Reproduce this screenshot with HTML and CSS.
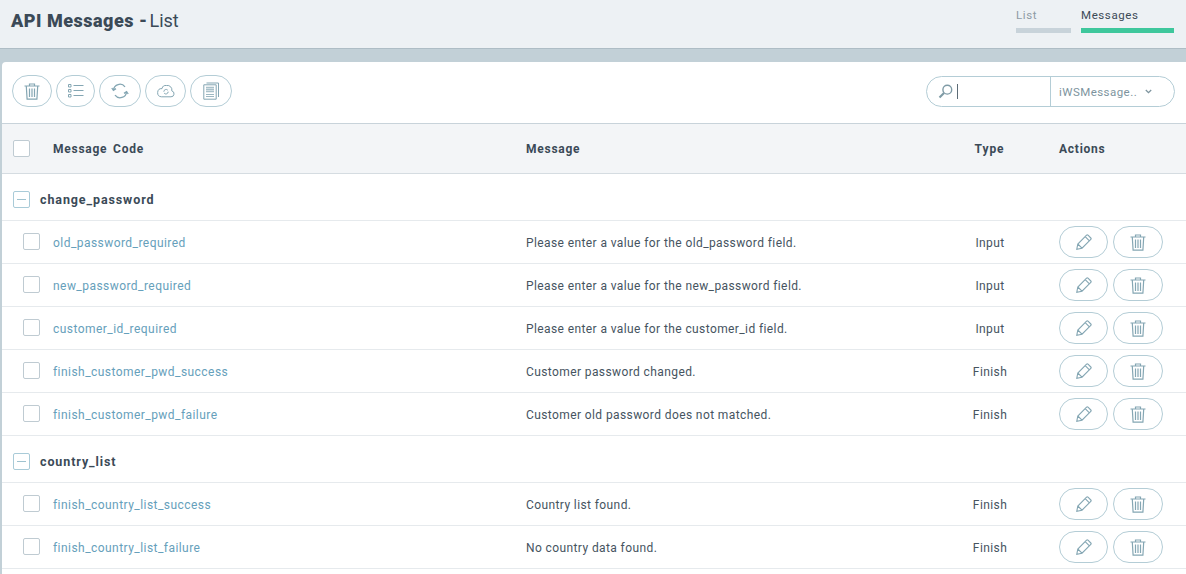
FILE: index.html
```html
<!DOCTYPE html>
<html lang="en">
<head>
<meta charset="utf-8">
<title>API Messages - List</title>
<link rel="stylesheet" href="styles.css">
</head>
<body>
<svg class="defs" width="0" height="0" aria-hidden="true">
  <defs>
    <symbol id="i-trash" viewBox="0 0 16 17">
      <path d="M.5 3h15M5.500 3V1h5v2M2.300 3.200l.8 13h9.800l.8-13M5.500 5.500v8.500M8 5.500v8.500M10.500 5.500v8.500" fill="none" stroke="currentColor" stroke-width="1.200"/>
    </symbol>
    <symbol id="i-pencil" viewBox="0 0 16 16">
      <path d="M.8 15.200l1-5.200L10.600 1.200a1 1 0 0 1 1.400 0l2.800 2.800a1 1 0 0 1 0 1.400L6 14.200zM1.800 10L6 14.200M9.200 2.600l4.200 4.200" fill="none" stroke="currentColor" stroke-width="1.100"/>
    </symbol>
  </defs>
</svg>
<header class="topbar">
  <h1 class="title"><b>API Messages -</b> <span class="title-sub">List</span></h1>
  <nav class="steps">
    <div class="step step-list">List</div>
    <div class="step step-active">Messages</div>
  </nav>
</header>
<div class="band">
  <main class="card">
    <div class="toolbar">
      <div class="tools">
        <button class="pill w40" type="button"><svg width="16" height="17"><use href="#i-trash"/></svg></button>
        <button class="pill w39" type="button">
          <svg width="16" height="16" viewBox="0 0 16 16" fill="none" stroke="currentColor"><path d="M.5 1.500h2.500v2.500H.5zM.5 6.500h2.500v2.500H.5zM.5 11.500h2.500v2.500H.5zM5.500 2.500h10M5.500 7.500h10M5.500 12.500h10"/></svg>
        </button>
        <button class="pill w42" type="button">
          <svg width="18" height="16" viewBox="0 0 18 16" fill="none" stroke="currentColor" stroke-width="1.300"><path d="M2.400 7A6.500 6.500 0 0 1 14 3.800M15.600 9A6.500 6.500 0 0 1 4 12.200M0.800 5l1.600 2.400L5 5.600M17.200 11l-1.600-2.400L13 10.400"/></svg>
        </button>
        <button class="pill w41" type="button">
          <svg width="18" height="14" viewBox="0 0 18 14" fill="none" stroke="currentColor"><path d="M4.500 12.800H14a3 3 0 0 0 .8-5.900A4.500 4.500 0 0 0 9.500 1.500 4 4 0 0 0 5 4.600a4.100 4.100 0 0 0-.5 8.200z"/><path d="M6.800 7.700a2.300 2.300 0 0 1 4-1.500M11.200 7.700a2.300 2.300 0 0 1-4 1.500" stroke-width="1"/></svg>
        </button>
        <button class="pill w42" type="button">
          <svg width="16" height="18" viewBox="0 0 16 18" fill="none" stroke="currentColor"><path d="M3.500 1h12v14M.8 2.800h12.400v14.400H.8z"/><path d="M3 5.500h8M3 7.500h8M3 9.500h8" stroke-width="1.600" opacity=".7"/><path d="M3 12.500h8M3 14.500h8" stroke-width=".8"/></svg>
        </button>
      </div>
      <div class="search">
        <div class="search-input">
          <svg width="15" height="15" viewBox="0 0 15 15" fill="none" stroke="currentColor"><circle cx="9.300" cy="5.700" r="4.400" stroke-width="1.400"/><path d="M6 9L1.500 13.500" stroke-width="2.200"/></svg>
          <span class="caret"></span>
        </div>
        <div class="search-select"><span>iWSMessage..</span><svg width="7" height="5" viewBox="0 0 7 5" fill="none" stroke="currentColor" stroke-width="1.300"><path d="M.8 1l2.700 2.600L6.200 1"/></svg></div>
      </div>
    </div>

    <div class="row head">
      <div class="c-check"><span class="box"></span></div>
      <div>Message Code</div>
      <div>Message</div>
      <div class="c-type">Type</div>
      <div class="c-actions">Actions</div>
    </div>

    <div class="group"><span class="box minus"></span><b>change_password</b></div>

    <div class="row">
      <div class="c-check"><span class="box"></span></div>
      <a class="code" href="#">old_password_required</a>
      <div class="msg">Please enter a value for the old_password field.</div>
      <div class="c-type">Input</div>
      <div class="c-actions"><button class="pill act-edit" type="button"><svg width="16" height="16"><use href="#i-pencil"/></svg></button><button class="pill act-del" type="button"><svg width="16" height="17"><use href="#i-trash"/></svg></button></div>
    </div>
    <div class="row">
      <div class="c-check"><span class="box"></span></div>
      <a class="code" href="#">new_password_required</a>
      <div class="msg">Please enter a value for the new_password field.</div>
      <div class="c-type">Input</div>
      <div class="c-actions"><button class="pill act-edit" type="button"><svg width="16" height="16"><use href="#i-pencil"/></svg></button><button class="pill act-del" type="button"><svg width="16" height="17"><use href="#i-trash"/></svg></button></div>
    </div>
    <div class="row">
      <div class="c-check"><span class="box"></span></div>
      <a class="code" href="#">customer_id_required</a>
      <div class="msg">Please enter a value for the customer_id field.</div>
      <div class="c-type">Input</div>
      <div class="c-actions"><button class="pill act-edit" type="button"><svg width="16" height="16"><use href="#i-pencil"/></svg></button><button class="pill act-del" type="button"><svg width="16" height="17"><use href="#i-trash"/></svg></button></div>
    </div>
    <div class="row">
      <div class="c-check"><span class="box"></span></div>
      <a class="code" href="#">finish_customer_pwd_success</a>
      <div class="msg">Customer password changed.</div>
      <div class="c-type">Finish</div>
      <div class="c-actions"><button class="pill act-edit" type="button"><svg width="16" height="16"><use href="#i-pencil"/></svg></button><button class="pill act-del" type="button"><svg width="16" height="17"><use href="#i-trash"/></svg></button></div>
    </div>
    <div class="row">
      <div class="c-check"><span class="box"></span></div>
      <a class="code" href="#">finish_customer_pwd_failure</a>
      <div class="msg">Customer old password does not matched.</div>
      <div class="c-type">Finish</div>
      <div class="c-actions"><button class="pill act-edit" type="button"><svg width="16" height="16"><use href="#i-pencil"/></svg></button><button class="pill act-del" type="button"><svg width="16" height="17"><use href="#i-trash"/></svg></button></div>
    </div>

    <div class="group"><span class="box minus"></span><b>country_list</b></div>

    <div class="row">
      <div class="c-check"><span class="box"></span></div>
      <a class="code" href="#">finish_country_list_success</a>
      <div class="msg">Country list found.</div>
      <div class="c-type">Finish</div>
      <div class="c-actions"><button class="pill act-edit" type="button"><svg width="16" height="16"><use href="#i-pencil"/></svg></button><button class="pill act-del" type="button"><svg width="16" height="17"><use href="#i-trash"/></svg></button></div>
    </div>
    <div class="row">
      <div class="c-check"><span class="box"></span></div>
      <a class="code" href="#">finish_country_list_failure</a>
      <div class="msg">No country data found.</div>
      <div class="c-type">Finish</div>
      <div class="c-actions"><button class="pill act-edit" type="button"><svg width="16" height="16"><use href="#i-pencil"/></svg></button><button class="pill act-del" type="button"><svg width="16" height="17"><use href="#i-trash"/></svg></button></div>
    </div>
  </main>
</div>
</body>
</html>
```
FILE: styles.css
```css
* { box-sizing: border-box; }
html, body { height: 574px; margin: 0; overflow: hidden; }
body {
  background: #c2d0d7;
  color: #46545f;
  font-family: Roboto, "Liberation Sans", sans-serif;
  font-size: 12px;
  letter-spacing: 0.4px;
  display: flex;
  flex-direction: column;
}
.defs { position: absolute; }

.topbar {
  height: 49px;
  flex: none;
  background: #edf1f4;
  border-bottom: 1px solid #aebdc5;
  display: flex;
  justify-content: space-between;
  padding: 0 12px 0 11px;
}
.title {
  margin: 10px 0 0;
  font-size: 18px;
  font-weight: 400;
  letter-spacing: 0.5px;
  line-height: 21px;
  color: #3b4a57;
}
.title b { font-weight: 900; letter-spacing: 0.5px; }
.title-sub { letter-spacing: 0; margin-left: -3px; }
.steps { display: flex; gap: 10px; }
.step {
  height: 33px;
  padding-top: 8px;
  line-height: 14px;
  font-size: 11.5px;
  letter-spacing: 0.6px;
  border-bottom: 5px solid #c8d3da;
}
.step-list { width: 55px; color: #8d9ba5; }
.step-active { width: 93px; color: #3b4a57; border-bottom-color: #3ec79c; }

.band { flex: 1; padding: 13px 0 0 2px; min-height: 0; }
.card { background: #fff; height: 100%; border-top-left-radius: 4px; }

.toolbar {
  height: 61px;
  padding: 13px 11px 0 10px;
  display: flex;
  justify-content: space-between;
  align-items: flex-start;
}
.tools { display: flex; gap: 4px; }
.pill {
  height: 32px;
  padding: 0;
  background: #fff;
  border: 1px solid #b4cdd6;
  border-radius: 16px;
  color: #84a6b3;
  display: flex;
  align-items: center;
  justify-content: center;
}
.w39 { width: 39px; }
.w40 { width: 40px; }
.w41 { width: 41px; }
.w42 { width: 42px; }

.search {
  width: 249px;
  height: 31px;
  margin-top: 1px;
  border: 1px solid #b4cdd6;
  border-radius: 16px;
  display: flex;
  color: #7f9ba6;
}
.search-input {
  width: 124px;
  border-right: 1px solid #b4cdd6;
  display: flex;
  align-items: center;
  padding-left: 11px;
  gap: 4px;
}
.caret { width: 1px; height: 15px; background: #5c6b76; }
.search-select {
  flex: 1;
  display: flex;
  align-items: center;
  padding-left: 8px;
  gap: 8px;
  font-size: 11.5px;
  letter-spacing: 0.45px;
  color: #7d949e;
}

.row {
  display: grid;
  grid-template-columns: 51px 473px 431px 66px 1fr;
  align-items: center;
  height: 43px;
  border-bottom: 1px solid #e6eaed;
}
.head {
  height: 51px;
  background: #f3f5f7;
  border-top: 1px solid #c8d3da;
  border-bottom: 1px solid #d5dce1;
  font-weight: 700;
  letter-spacing: 0.75px;
  word-spacing: 2px;
  color: #3b4a57;
}
.c-check { padding-left: 21px; display: flex; padding-bottom: 1px; }
.head .c-check { padding: 0 0 0 11px; }
.c-type { text-align: center; }
.head .c-type { padding-right: 1px; letter-spacing: 0.95px; }
.msg, .code, .row:not(.head) .c-type { padding-top: 2px; }
.c-actions { display: flex; gap: 5px; padding-left: 36px; }
.act-edit { width: 49px; padding-right: 1px; padding-left: 1px; }
.act-del { width: 50px; }
.code { color: #66a0bb; text-decoration: none; letter-spacing: 0.45px; }

.box {
  display: block;
  width: 17px;
  height: 17px;
  background: #fff;
  border: 1px solid #bfcbd2;
  border-radius: 2px;
}
.minus {
  border-color: #a9cbd8;
  position: relative;
  flex: none;
  margin-top: 1px;
}
.minus::after {
  content: "";
  position: absolute;
  left: 3px;
  right: 3px;
  top: 7px;
  height: 1px;
  background: #9fc2cf;
}
.group {
  height: 47px;
  padding: 4px 0 0 11px;
  display: flex;
  align-items: center;
  gap: 10px;
  border-bottom: 1px solid #e6eaed;
  font-size: 12.5px;
  letter-spacing: 0.9px;
  color: #3b4a57;
}
```
